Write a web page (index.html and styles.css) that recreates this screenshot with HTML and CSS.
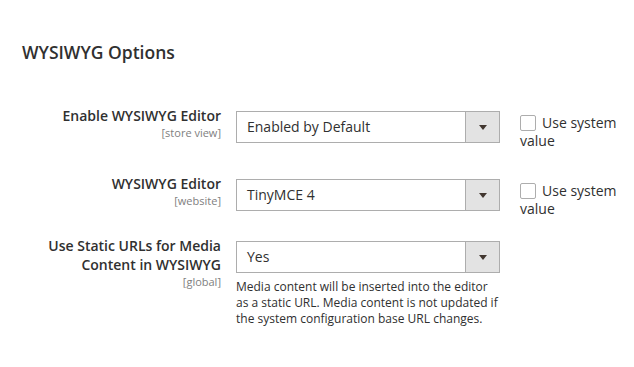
FILE: index.html
```html
<!DOCTYPE html>
<html lang="en">
<head>
    <meta charset="UTF-8">
    <meta name="viewport" content="width=device-width, initial-scale=1.0">
    <title>WYSIWYG Options</title>
    <link rel="stylesheet" href="styles.css">
</head>
<body>

<div class="config-section">
    <h2 class="section-title">WYSIWYG Options</h2>

    <div class="config-row row-first">
        <div class="config-label">
            <label for="wysiwyg_enabled">Enable WYSIWYG Editor</label>
            <span class="scope">[store view]</span>
        </div>
        <div class="config-value">
            <div class="select-box">
                <span class="select-text">Enabled by Default</span>
                <span class="select-arrow"></span>
            </div>
        </div>
        <div class="config-inherit">
            <span class="checkbox"></span>
            <span class="inherit-text">Use system value</span>
        </div>
    </div>

    <div class="config-row row-second">
        <div class="config-label">
            <label for="wysiwyg_editor">WYSIWYG Editor</label>
            <span class="scope">[website]</span>
        </div>
        <div class="config-value">
            <div class="select-box">
                <span class="select-text">TinyMCE 4</span>
                <span class="select-arrow"></span>
            </div>
        </div>
        <div class="config-inherit">
            <span class="checkbox"></span>
            <span class="inherit-text">Use system value</span>
        </div>
    </div>

    <div class="config-row row-third">
        <div class="config-label">
            <label for="static_urls">Use Static URLs for Media Content in WYSIWYG</label>
            <span class="scope">[global]</span>
        </div>
        <div class="config-value">
            <div class="select-box">
                <span class="select-text">Yes</span>
                <span class="select-arrow"></span>
            </div>
            <p class="note">Media content will be inserted into the editor as a static URL. Media content is not updated if the system configuration base URL changes.</p>
        </div>
        <div class="config-inherit"></div>
    </div>
</div>

</body>
</html>
```

FILE: styles.css
```css
body {
    font-family: "Open Sans", "Liberation Sans", Arial, sans-serif;
    background-color: #fff;
    color: #303030;
    margin: 0;
}
.config-section {
    padding: 40px 0 0 22px;
}
.section-title {
    font-size: 17.5px;
    font-weight: 600;
    color: #303030;
    margin: 0 0 42px 0;
    line-height: 24px;
}
.config-row {
    display: grid;
    grid-template-columns: 199px 264px 120px;
    column-gap: 15px;
    margin-bottom: 24px;
}
.config-row.row-second {
    margin-bottom: 18px;
}
.config-label {
    text-align: right;
}
.config-label label {
    display: block;
    font-size: 14px;
    font-weight: 600;
    line-height: 19px;
}
.config-label .scope {
    display: block;
    font-size: 11px;
    color: #808080;
    line-height: normal;
}
.select-box {
    display: flex;
    height: 32px;
    box-sizing: border-box;
    border: 1px solid #adadad;
    background-color: #fff;
    margin-top: 5px;
}
.select-text {
    flex: 1;
    font-size: 14px;
    line-height: 30px;
    padding-left: 10px;
}
.select-arrow {
    width: 33px;
    background-color: #e3e3e3;
    border-left: 1px solid #adadad;
    position: relative;
}
.select-arrow::after {
    content: "";
    position: absolute;
    left: 13px;
    top: 13px;
    border-left: 4px solid transparent;
    border-right: 4px solid transparent;
    border-top: 5px solid #41362f;
}
.config-inherit {
    display: flex;
    align-items: flex-start;
    margin-left: 5px;
    padding-top: 8px;
}
.checkbox {
    flex: none;
    width: 16px;
    height: 16px;
    box-sizing: border-box;
    border: 1px solid #adadad;
    border-radius: 2px;
    margin-top: 1px;
}
.inherit-text {
    font-size: 14px;
    line-height: 18px;
    margin-left: -16px;
    text-indent: 22px;
}
.note {
    font-size: 12px;
    line-height: 16px;
    margin: 6px 0 0 0;
    color: #303030;
}
```
